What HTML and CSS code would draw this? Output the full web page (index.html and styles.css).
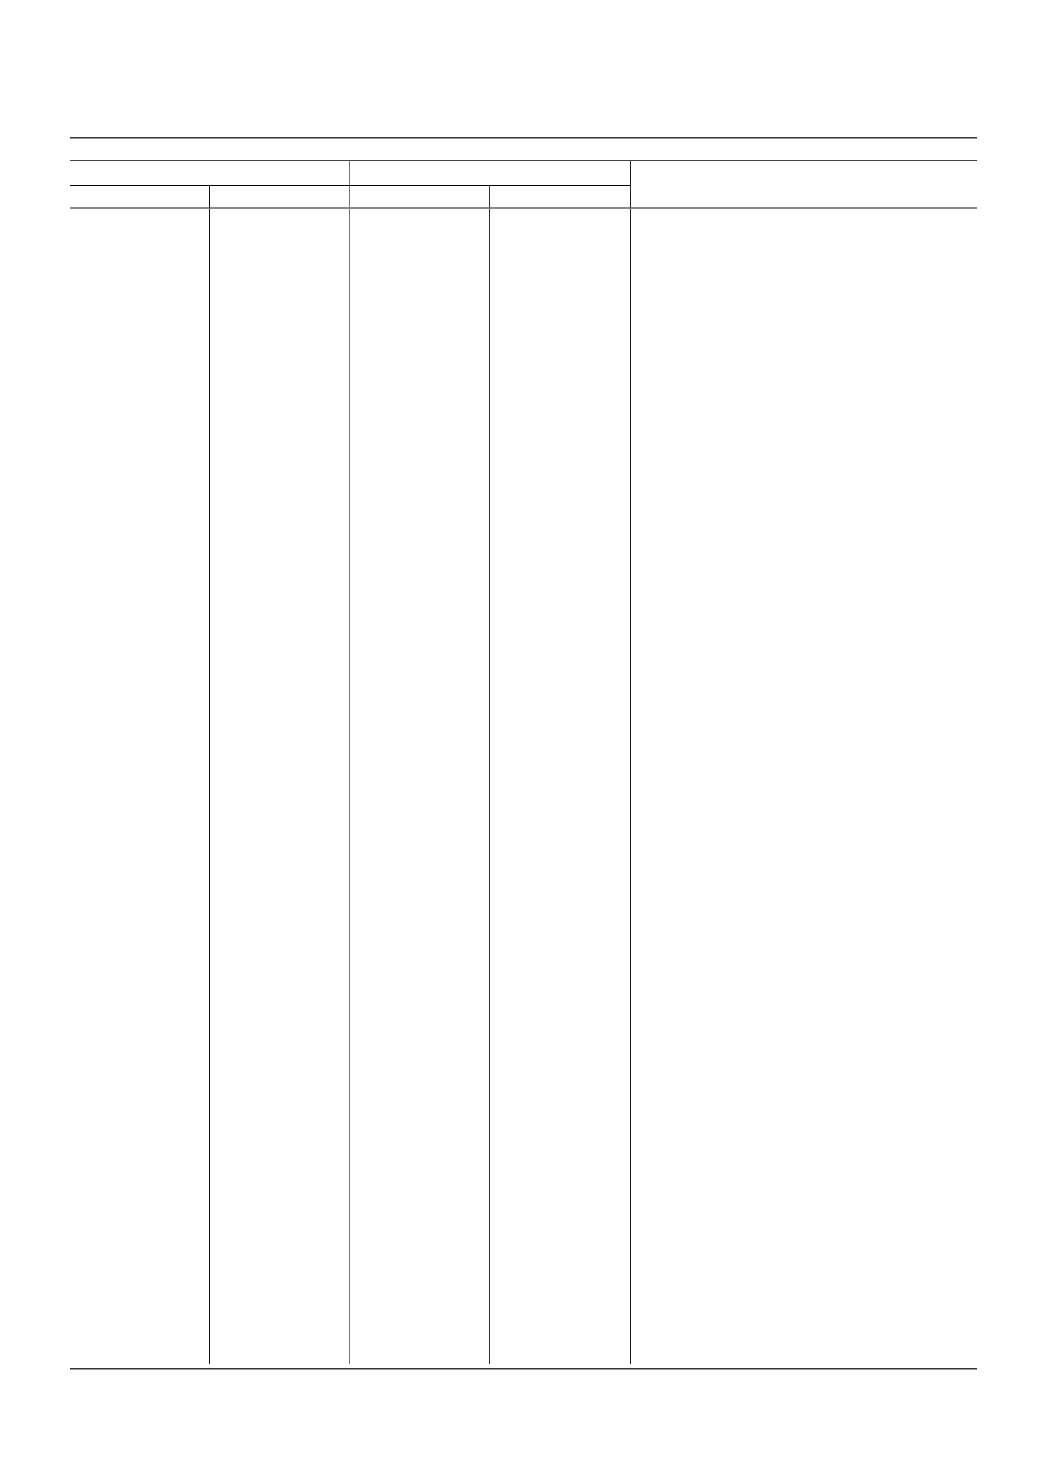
FILE: index.html
```html
<!DOCTYPE html>
<html lang="en">
<head>
<meta charset="utf-8">
<title>Table</title>
<link rel="stylesheet" href="styles.css">
</head>
<body>
<div class="page">
  <div class="rule rule-top"></div>
  <div class="grid">
    <div class="cell h1a"></div>
    <div class="cell h1b"></div>
    <div class="cell h1c"></div>
    <div class="cell h2 c1"></div>
    <div class="cell h2 c2"></div>
    <div class="cell h2 c3"></div>
    <div class="cell h2 c4"></div>
    <div class="cell body c1"></div>
    <div class="cell body c2"></div>
    <div class="cell body c3"></div>
    <div class="cell body c4"></div>
    <div class="cell body c5"></div>
  </div>
  <div class="rule rule-bottom"></div>
</div>
</body>
</html>
```
FILE: styles.css
```css
html, body {
  margin: 0;
  padding: 0;
  background: #fff;
  font-family: "Liberation Sans", Arial, sans-serif;
}
.page {
  margin-left: 70px;
  width: 907px;
  padding-top: 137px;
}
.rule {
  height: 0;
  border-top: 1px solid #333;
  border-bottom: 1px solid #999;
}
.rule-top {
  margin-bottom: 21px;
}
.rule-bottom {
  margin-top: 4px;
}
.grid {
  display: grid;
  grid-template-columns: 139px 140px 140px 141px 1fr;
  grid-template-rows: 25px 23px 1155px;
  border-top: 1px solid #444;
}
.cell {
  box-sizing: border-box;
}
.h1a {
  grid-column: 1 / 3;
  grid-row: 1;
  border-bottom: 1px solid #000;
}
.h1b {
  grid-column: 3 / 5;
  grid-row: 1;
  border-left: 1px solid #777;
  border-bottom: 1px solid #000;
}
.h1c {
  grid-column: 5;
  grid-row: 1 / 3;
  border-left: 1px solid #222;
  border-bottom: 2px solid #888;
}
.h2 {
  grid-row: 2;
  border-bottom: 2px solid #888;
}
.body {
  grid-row: 3;
}
.c1 { grid-column: 1; }
.c2 { grid-column: 2; border-left: 1px solid #111; }
.c3 { grid-column: 3; border-left: 1px solid #777; }
.c4 { grid-column: 4; border-left: 1px solid #333; }
.c5 { grid-column: 5; border-left: 1px solid #222; }
```
